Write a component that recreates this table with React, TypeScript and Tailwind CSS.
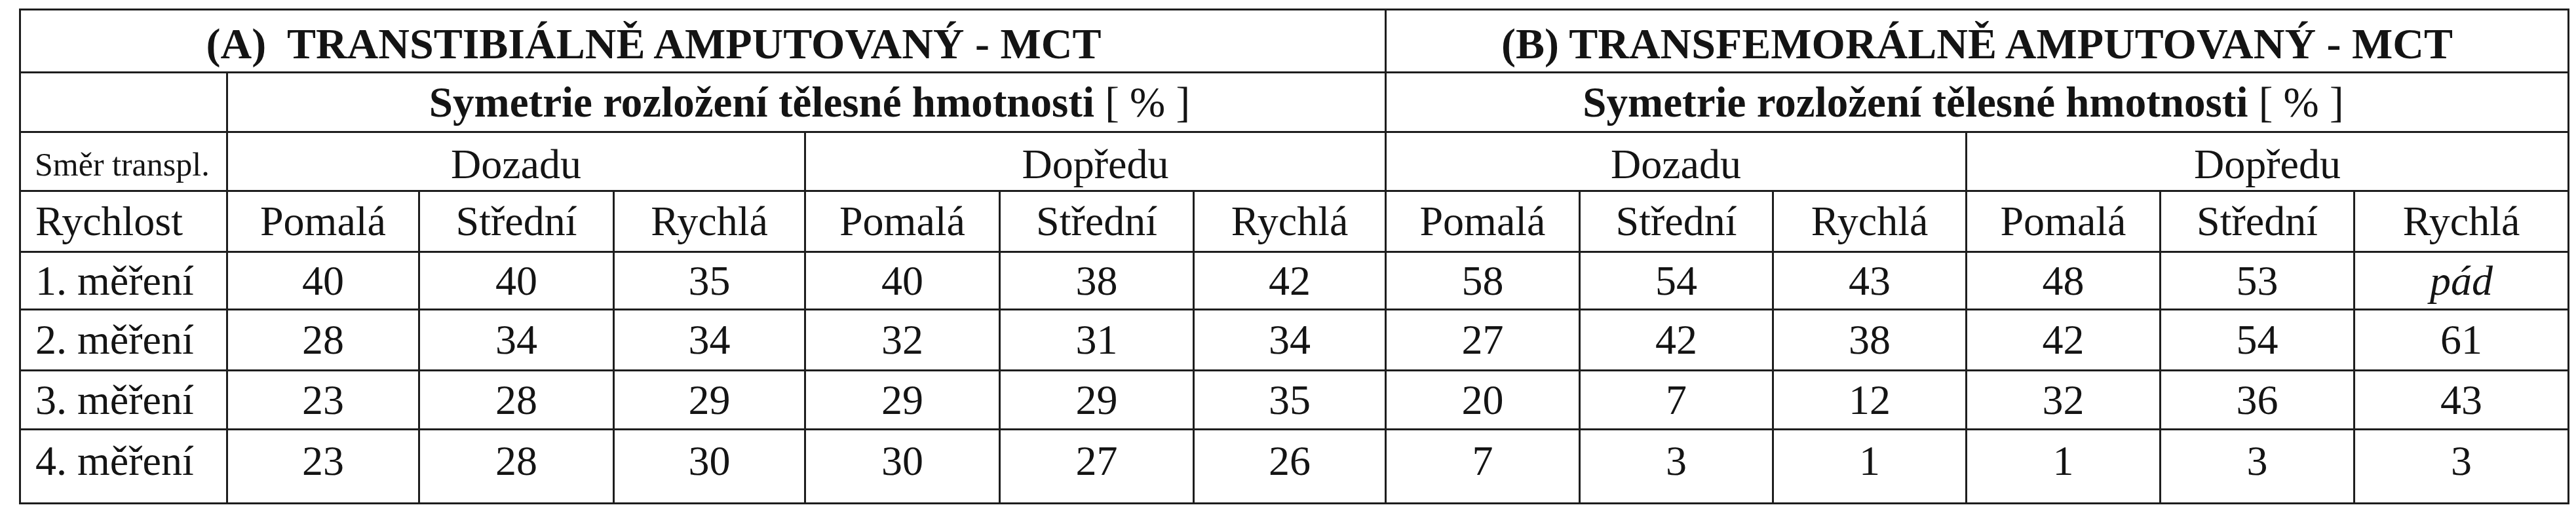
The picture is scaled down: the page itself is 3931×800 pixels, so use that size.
import React from "react";

const rows: { label: string; values: string[] }[] = [
  { label: "1. měření", values: ["40", "40", "35", "40", "38", "42", "58", "54", "43", "48", "53", "pád"] },
  { label: "2. měření", values: ["28", "34", "34", "32", "31", "34", "27", "42", "38", "42", "54", "61"] },
  { label: "3. měření", values: ["23", "28", "29", "29", "29", "35", "20", "7", "12", "32", "36", "43"] },
  { label: "4. měření", values: ["23", "28", "30", "30", "27", "26", "7", "3", "1", "1", "3", "3"] },
];

const speeds = ["Pomalá", "Střední", "Rychlá"];

const Cell: React.FC<{ className?: string; children?: React.ReactNode }> = ({ className = "", children }) => (
  <div className={`bg-white flex items-center justify-center leading-none whitespace-nowrap ${className}`}>{children}</div>
);

const Symmetry = () => (
  <span>
    Symetrie rozložení tělesné hmotnosti <span className="font-normal">[ % ]</span>
  </span>
);

export default function App() {
  return (
    <div className="w-[3931px] h-[800px] bg-white [font-family:'Liberation_Serif','Times_New_Roman',serif] text-[#141414]">
      <div className="ml-[29px] pt-[13px]">
        <div className="inline-grid bg-[#1e1e1e] p-[3px] gap-[3px] grid-cols-[313px_290px_294px_289px_294px_293px_290px_293px_292px_292px_293px_293px_324px] grid-rows-[93px_88px_87px_90px_85px_90px_87px_110px] text-[64px]">
          {/* title row */}
          <Cell className="col-span-7 font-bold text-[66px] pt-[9px] pr-[150px]">(A)&nbsp; TRANSTIBIÁLNĚ AMPUTOVANÝ - MCT</Cell>
          <Cell className="col-span-6 font-bold text-[66px] pt-[9px]">(B) TRANSFEMORÁLNĚ AMPUTOVANÝ - MCT</Cell>

          {/* measure row */}
          <Cell />
          <Cell className="col-span-6 font-bold text-[65px] pl-[10px]">
            <Symmetry />
          </Cell>
          <Cell className="col-span-6 font-bold text-[65px] pr-[42px]">
            <Symmetry />
          </Cell>

          {/* direction row */}
          <Cell className="justify-start pl-[21px] pt-[9px] text-[50px]">Směr transpl.</Cell>
          <Cell className="col-span-3 pt-[9px]">Dozadu</Cell>
          <Cell className="col-span-3 pt-[9px]">Dopředu</Cell>
          <Cell className="col-span-3 pt-[9px]">Dozadu</Cell>
          <Cell className="col-span-3 pt-[9px]">Dopředu</Cell>

          {/* speed row */}
          <Cell className="justify-start pl-[22px]">Rychlost</Cell>
          {[0, 1, 2, 3].map((g) =>
            speeds.map((s) => <Cell key={`${g}-${s}`}>{s}</Cell>)
          )}

          {/* data rows */}
          {rows.map((r, i) => {
            const last = i === rows.length - 1;
            return (
              <React.Fragment key={r.label}>
                <Cell className={`justify-start pl-[22px] ${last ? "pb-[16px]" : ""}`}>{r.label}</Cell>
                {r.values.map((v, j) => (
                  <Cell key={j} className={`${last ? "pb-[16px]" : ""} ${v === "pád" ? "italic" : ""}`}>
                    {v}
                  </Cell>
                ))}
              </React.Fragment>
            );
          })}
        </div>
      </div>
    </div>
  );
}
